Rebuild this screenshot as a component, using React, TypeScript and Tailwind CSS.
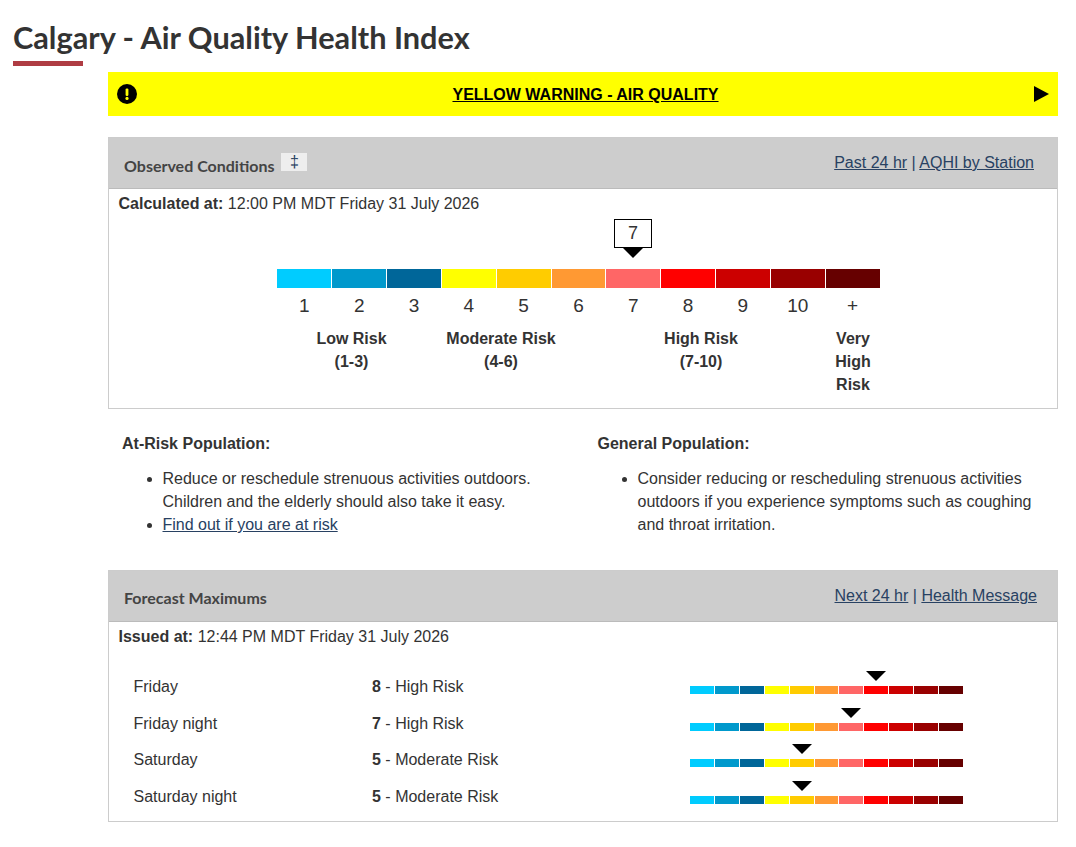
const colors = ['#00ccff', '#0099cc', '#006699', '#ffff00', '#ffcc00', '#ff9933', '#ff6666', '#ff0000', '#cc0000', '#990000', '#660000']
const labels = ['1', '2', '3', '4', '5', '6', '7', '8', '9', '10', '+']

const forecast = [
  { day: 'Friday', value: 8, risk: 'High Risk', rowClass: 'h-[37px]' },
  { day: 'Friday night', value: 7, risk: 'High Risk', rowClass: 'h-[37px]' },
  { day: 'Saturday', value: 5, risk: 'Moderate Risk', rowClass: 'h-[36px]' },
  { day: 'Saturday night', value: 5, risk: 'Moderate Risk', rowClass: 'h-[37px]' },
]

function MiniScale({ value }: { value: number }) {
  return (
    <div className="mb-[9px] w-[273px]">
      <div className="flex h-[10px]">
        {colors.map((c, i) => (
          <div key={c} className="flex flex-1 justify-center">
            {i === value - 1 && (
              <div className="h-0 w-0 border-x-[10px] border-t-[10px] border-x-transparent border-t-black" />
            )}
          </div>
        ))}
      </div>
      <div className="mt-[5px] flex h-[8px] gap-px">
        {colors.map((c) => (
          <div key={c} className="flex-1" style={{ backgroundColor: c }} />
        ))}
      </div>
    </div>
  )
}

export default function App() {
  return (
    <div className="h-[847px] w-[1076px] overflow-hidden bg-white font-['Liberation_Sans',sans-serif] text-[16px] text-[#333]">
      <div className="pl-[13px] pt-[19px]">
        <h1 className="font-['Lato',sans-serif] text-[30.7px] leading-[38px] font-bold text-[#333]">
          Calgary - Air Quality Health Index
        </h1>
        <div className="mt-[4px] h-[5px] w-[70px] bg-[#af3c43]" />
      </div>

      <div className="ml-[108px] mt-[6px] w-[950px]">
        <div className="flex h-[44px] items-center justify-between bg-[#ffff00] pl-[9px] pr-[9px] text-black">
          <svg width="20" height="20" viewBox="0 0 20 20">
            <circle cx="10" cy="10" r="10" fill="#000" />
            <rect x="8.6" y="4.4" width="2.8" height="7.6" rx="1.2" fill="#ffff00" />
            <circle cx="10" cy="14.4" r="1.6" fill="#ffff00" />
          </svg>
          <a href="#" className="pt-[2px] font-bold underline">YELLOW WARNING - AIR QUALITY</a>
          <div className="h-0 w-0 border-y-[8px] border-l-[15px] border-y-transparent border-l-black" />
        </div>

        <section className="mt-[21px] h-[272px] border border-[#ccc]">
          <div className="flex h-[51px] items-center justify-between border-b border-[#bbb] bg-[#cdcdcd] pl-[15px] pr-[23px]">
            <div className="flex items-start">
              <span className="mt-[5px] font-['Lato',sans-serif] text-[16px] font-bold text-[#444]">Observed Conditions</span>
              <span className="ml-[7px] mt-[4px] flex h-[18px] w-[26px] items-center justify-center bg-[#eee] text-[16px] leading-none text-[#284162]">‡</span>
            </div>
            <div className="text-[#284162]">
              <a href="#" className="underline">Past 24 hr</a> | <a href="#" className="underline">AQHI by Station</a>
            </div>
          </div>
          <p className="ml-[9.5px] mt-[5px] leading-[20px]"><b>Calculated at:</b> 12:00 PM MDT Friday 31 July 2026</p>

          <div className="ml-[168px] w-[603px]">
            <div className="relative h-[55px]">
              <div className="absolute left-[337px] top-[5px] flex h-[29px] w-[38px] items-center justify-center border border-black bg-white text-[18px] text-[#333]">7</div>
              <div className="absolute left-[346px] top-[34px] h-0 w-0 border-x-[10px] border-t-[10px] border-x-transparent border-t-black" />
            </div>
            <div className="flex h-[19px] gap-px">
              {colors.map((c) => (
                <div key={c} className="flex-1" style={{ backgroundColor: c }} />
              ))}
            </div>
            <div className="mt-[7px] flex text-[19px] leading-[22px]">
              {labels.map((l) => (
                <div key={l} className="flex-1 text-center">{l}</div>
              ))}
            </div>
            <div className="mt-[10px] grid grid-cols-[149px_150px_250px_54px] text-center font-bold leading-[23px]">
              <div>Low Risk<br />(1-3)</div>
              <div>Moderate Risk<br />(4-6)</div>
              <div>High Risk<br />(7-10)</div>
              <div>Very<br />High<br />Risk</div>
            </div>
          </div>
        </section>

        <div className="mt-[23px] grid h-[138px] grid-cols-2 leading-[23px]">
          <div className="pl-[14px] pr-[20px]">
            <p className="font-bold">At-Risk Population:</p>
            <ul className="mt-[12px] list-disc pl-[40.5px]">
              <li>Reduce or reschedule strenuous activities outdoors. Children and the elderly should also take it easy.</li>
              <li><a href="#" className="text-[#284162] underline">Find out if you are at risk</a></li>
            </ul>
          </div>
          <div className="pl-[14.5px] pr-[20px]">
            <p className="font-bold">General Population:</p>
            <ul className="mt-[12px] list-disc pl-[40px]">
              <li>Consider reducing or rescheduling strenuous activities outdoors if you experience symptoms such as coughing and throat irritation.</li>
            </ul>
          </div>
        </div>

        <section className="h-[252px] border border-[#ccc]">
          <div className="flex h-[51px] items-center justify-between border-b border-[#bbb] bg-[#cdcdcd] pl-[15px] pr-[20px]">
            <span className="mt-[3px] font-['Lato',sans-serif] text-[16px] font-bold text-[#444]">Forecast Maximums</span>
            <div className="text-[#284162]">
              <a href="#" className="underline">Next 24 hr</a> | <a href="#" className="underline">Health Message</a>
            </div>
          </div>
          <p className="ml-[9.5px] mt-[5px] leading-[20px]"><b>Issued at:</b> 12:44 PM MDT Friday 31 July 2026</p>
          <div className="mt-[21px]">
            {forecast.map((f) => (
              <div key={f.day} className={`flex items-center ${f.rowClass}`}>
                <div className="w-[238px] pl-[24.5px]">{f.day}</div>
                <div className="w-[343px] pl-[25px]"><b>{f.value}</b> - {f.risk}</div>
                <div><MiniScale value={f.value} /></div>
              </div>
            ))}
          </div>
        </section>
      </div>
    </div>
  )
}
